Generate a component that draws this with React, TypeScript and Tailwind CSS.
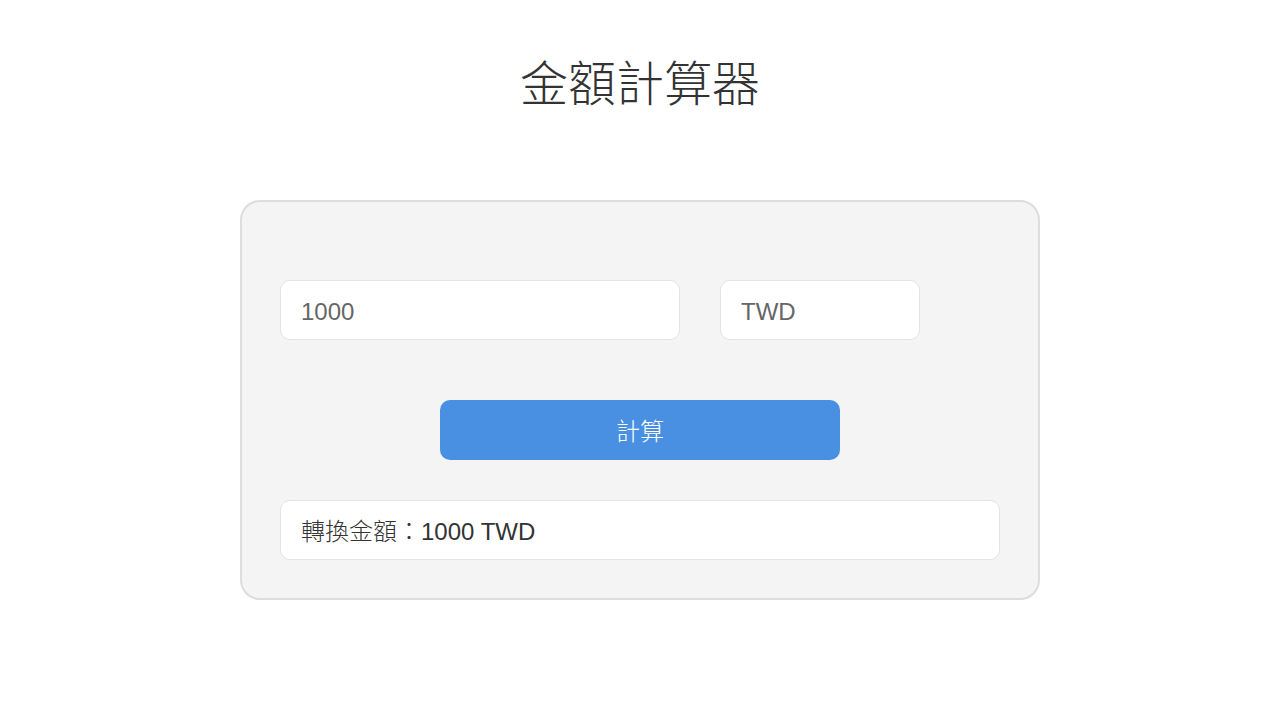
export default function App() {
  const font = { fontFamily: '"Liberation Sans", "Noto Sans CJK TC", sans-serif' };
  return (
    <div className="min-h-screen bg-white flex flex-col items-center" style={font}>
      <h1 className="mt-[54px] text-[48px] leading-[62px] text-[#333333] font-light">金額計算器</h1>
      <div className="mt-[84px] w-[800px] h-[400px] rounded-[20px] border-2 border-[#dddddd] bg-[#f4f4f4] px-[38px] pt-[78px] flex flex-col">
        <div className="flex gap-[40px]">
          <div className="w-[400px] h-[60px] rounded-[10px] border border-[#e3e3e3] bg-white flex items-center px-[20px] pt-[4px] text-[24px] text-[#666666]">1000</div>
          <div className="w-[200px] h-[60px] rounded-[10px] border border-[#e3e3e3] bg-white flex items-center px-[20px] pt-[4px] text-[24px] text-[#666666]">TWD</div>
        </div>
        <div className="mt-[60px] flex justify-center">
          <button className="w-[400px] h-[60px] rounded-[10px] bg-[#4a90e2] text-white text-[24px] font-light flex items-center justify-center pt-[4px]">計算</button>
        </div>
        <div className="mt-[40px] w-[720px] h-[60px] rounded-[10px] border border-[#e3e3e3] bg-white flex items-center px-[20px] pt-[4px] text-[24px] text-[#333333]">
          <span className="font-light">轉換金額：</span>
          <span>1000 TWD</span>
        </div>
      </div>
    </div>
  );
}
